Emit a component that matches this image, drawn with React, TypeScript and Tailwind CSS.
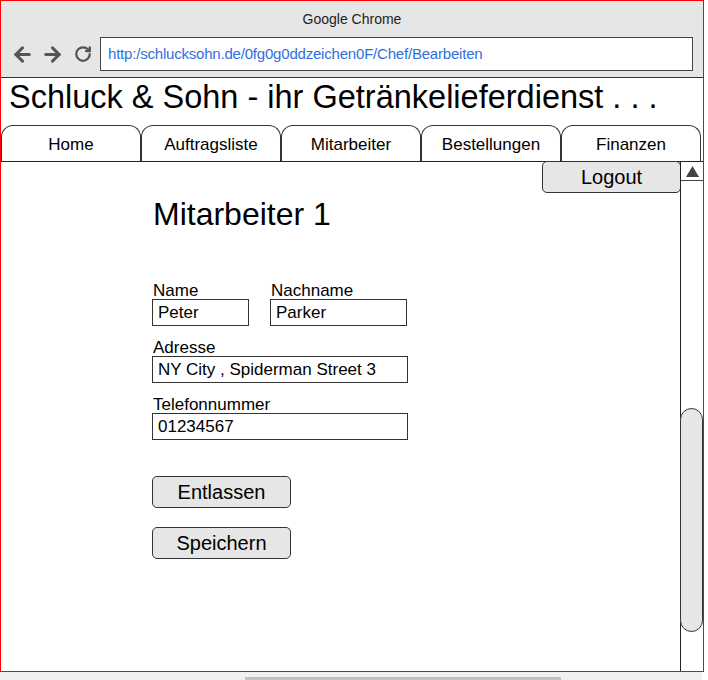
import { ArrowLeft, ArrowRight, RotateCw } from "lucide-react";

const tabs = ["Home", "Auftragsliste", "Mitarbeiter", "Bestellungen", "Finanzen"];

function Field({ label, value, w }: { label: string; value: string; w: string }) {
  return (
    <div className="flex flex-col">
      <span className="text-[17px] leading-[16px] pl-[1px] pt-[1px]">{label}</span>
      <div className={`${w} h-[27px] border border-[#333] flex items-center pl-[5px] text-[17px] leading-none`}>
        {value}
      </div>
    </div>
  );
}

export default function App() {
  return (
    <div className="w-[708px] h-[680px] bg-white font-['Liberation_Sans',Arial,sans-serif] text-black flex flex-col">
      <div className="w-[704px] h-[672px] border border-[#ff0000] flex flex-col overflow-hidden">
        {/* browser chrome */}
        <div className="h-[77px] bg-[#e6e6e6] border-b border-[#333] flex flex-col">
          <div className="text-[14px] text-center pt-[10px] leading-[16px] text-[#222]">Google Chrome</div>
          <div className="flex items-center mt-[10px] pl-[10px] pr-[10px]">
            <ArrowLeft size={23} strokeWidth={3.2} className="text-[#555]" />
            <ArrowRight size={23} strokeWidth={3.2} className="text-[#555] ml-[7px]" />
            <RotateCw size={18} strokeWidth={3} className="text-[#555] ml-[10px]" />
            <div className="ml-[8px] flex-1 h-[34px] bg-white border border-[#444] flex items-center pl-[7px] text-[15px] tracking-[-0.2px] text-[#2f6fe0]">
              http:/schlucksohn.de/0fg0g0ddzeichen0F/Chef/Bearbeiten
            </div>
          </div>
        </div>

        {/* site title */}
        <div className="text-[32.5px] leading-none pl-[8px] pt-[3px] h-[47px]">
          Schluck &amp; Sohn - ihr Getränkelieferdienst . . .
        </div>

        {/* tabs */}
        <div className="flex h-[37px] border-b border-[#222]">
          {tabs.map((t) => (
            <div
              key={t}
              className="w-[140px] h-[36px] border border-b-0 border-[#333] rounded-t-[12px] flex items-center justify-center text-[17px] pt-[2px]"
            >
              {t}
            </div>
          ))}
        </div>

        {/* body */}
        <div className="flex-1 flex">
          <div className="flex-1 flex flex-col">
            <div className="flex justify-end">
              <button className="w-[139px] h-[32px] -mr-[1px] -mt-[1px] bg-[#e6e6e6] border border-[#333] rounded-[5px] text-[20px] leading-none">
                Logout
              </button>
            </div>
            <div className="pl-[151px] flex flex-col">
              <h1 className="text-[32px] leading-none mt-[5px] pl-[1px]">Mitarbeiter 1</h1>
              <div className="flex gap-[21px] mt-[52px]">
                <Field label="Name" value="Peter" w="w-[97px]" />
                <Field label="Nachname" value="Parker" w="w-[137px]" />
              </div>
              <div className="mt-[13px]">
                <Field label="Adresse" value="NY City , Spiderman Street 3" w="w-[256px]" />
              </div>
              <div className="mt-[13px]">
                <Field label="Telefonnummer" value="01234567" w="w-[256px]" />
              </div>
              <button className="mt-[36px] w-[139px] h-[32px] bg-[#e6e6e6] border border-[#333] rounded-[5px] text-[20px] leading-none">
                Entlassen
              </button>
              <button className="mt-[19px] w-[139px] h-[32px] bg-[#e6e6e6] border border-[#333] rounded-[5px] text-[20px] leading-none">
                Speichern
              </button>
            </div>
          </div>

          {/* scrollbar */}
          <div className="w-[23px] border-l border-[#222] flex flex-col">
            <div className="h-[19px] border-b border-[#444] flex items-center justify-center">
              <svg width="13" height="11" viewBox="0 0 13 11">
                <polygon points="6.5,0 13,11 0,11" fill="#444" />
              </svg>
            </div>
            <div className="mt-[227px] h-[224px] bg-[#e6e6e6] border border-[#333] rounded-full -ml-[1px]" />
          </div>
        </div>
      </div>
      <div className="h-[8px] w-[702px] bg-[#f0f0f0] flex items-end">
        <div className="ml-[245px] w-[316px] h-[3px] bg-[#c2c2c2]" />
      </div>
    </div>
  );
}
